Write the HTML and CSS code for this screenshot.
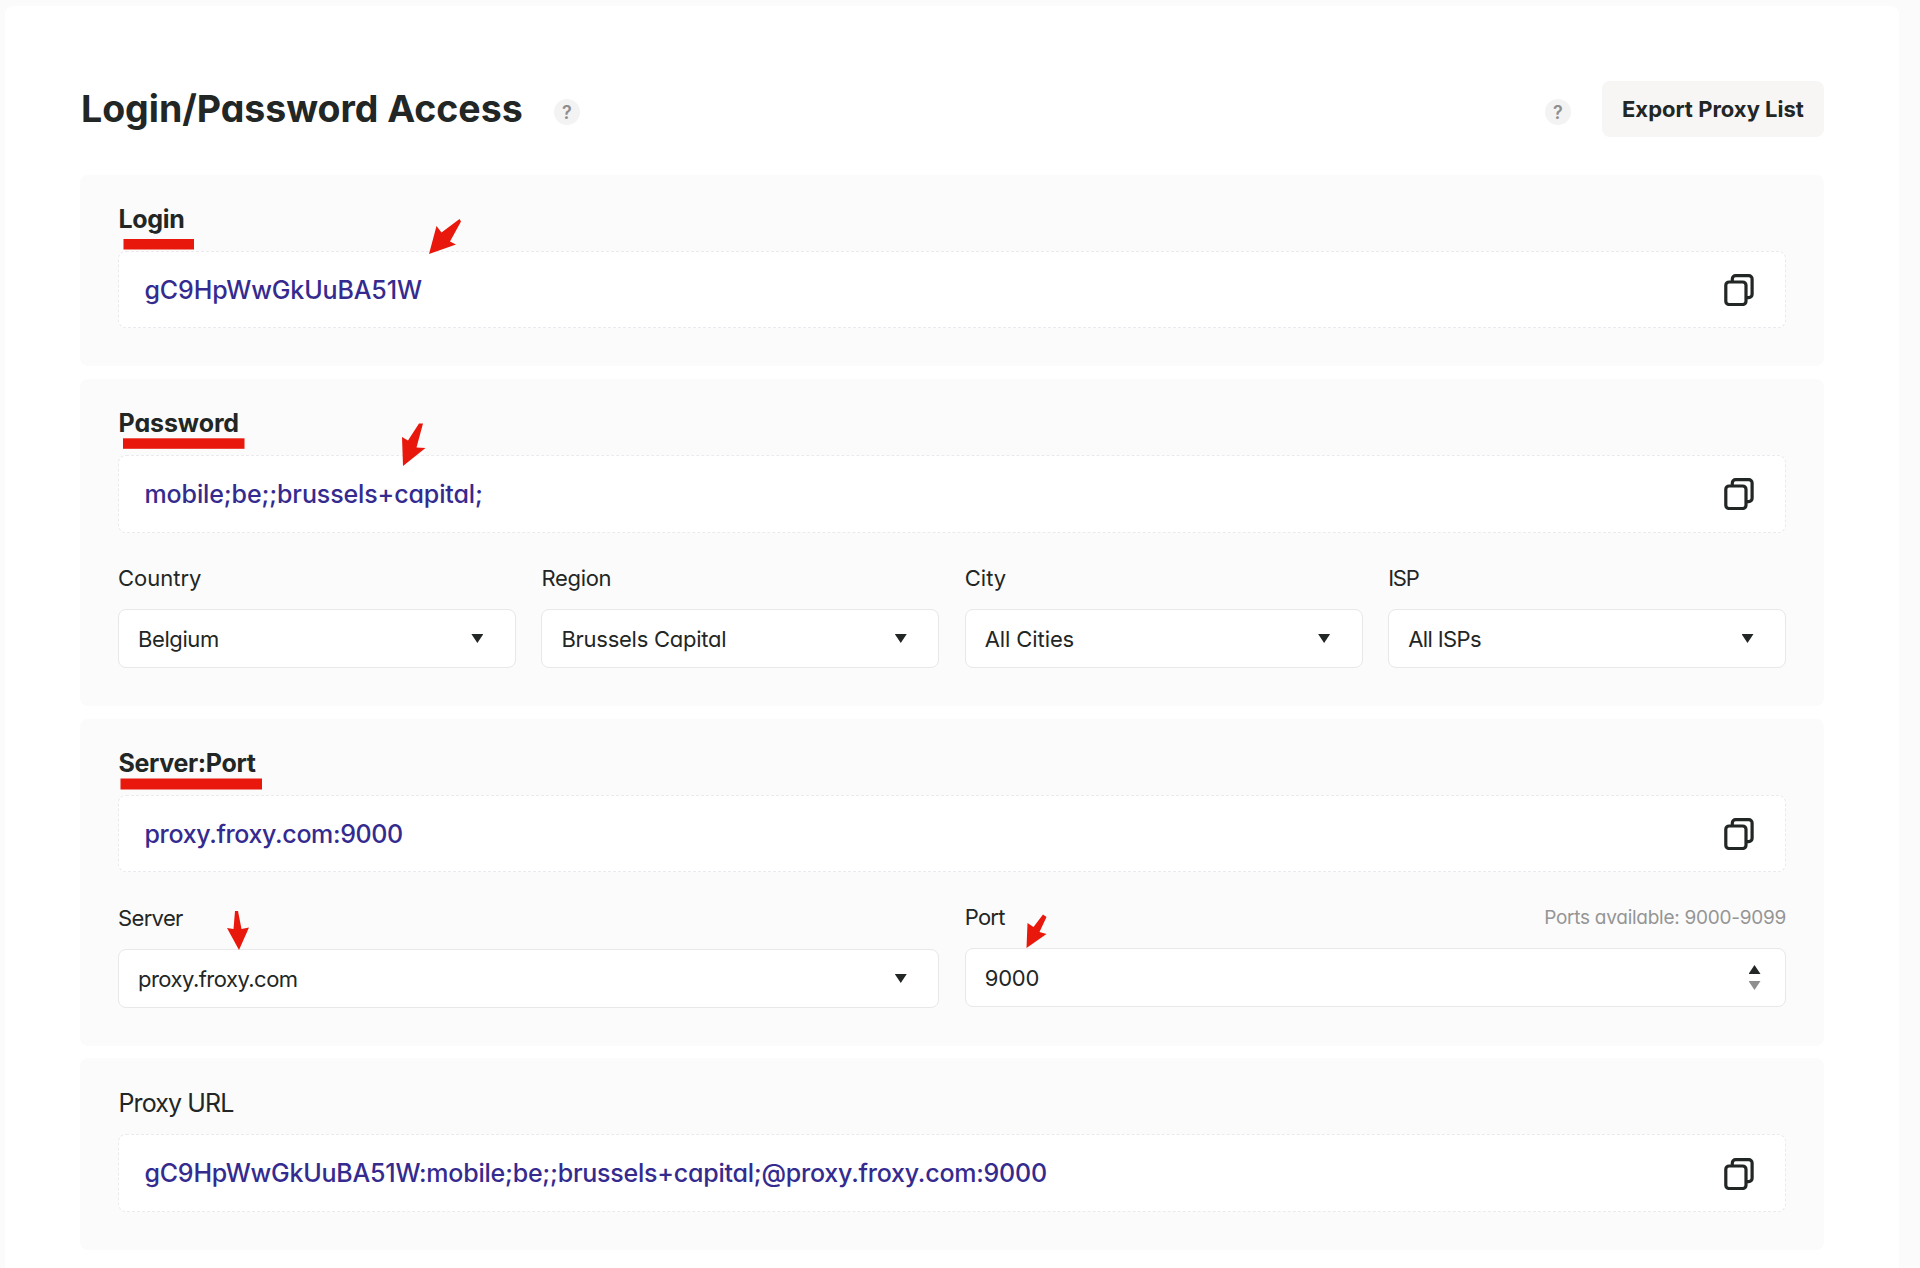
FILE: index.html
```
<!DOCTYPE html>
<html lang="en">
<head>
  <meta charset="UTF-8">
  <title>Login/Password Access</title>
  <link rel="stylesheet" href="styles.css">
</head>
<body>
  <svg class="sprite" width="0" height="0">
    <symbol id="copy" viewBox="0 0 30 32">
      <path d="M8.3 7.5V5a3.3 3.3 0 0 1 3.3-3.3h13.2A3.3 3.3 0 0 1 28.1 5v15.3a3.3 3.3 0 0 1-3.3 3.3h-2.3" />
      <rect x="1.8" y="8" width="20.2" height="22.5" rx="3.3" />
    </symbol>
  </svg>

  <main class="panel">
    <header class="header">
      <h1 class="title">Login/Password Access</h1>
      <span class="help">?</span>
      <span class="help help-export">?</span>
      <button class="export"><span>Export Proxy List</span></button>
    </header>

    <section class="card">
      <h2 class="card-title t-login">Login</h2>
      <div class="value">
        <span class="v-login">gC9HpWwGkUuBA51W</span>
        <svg class="copy"><use href="#copy" /></svg>
      </div>
    </section>

    <section class="card">
      <h2 class="card-title">Password</h2>
      <div class="value value-tall">
        <span class="v-password">mobile;be;;brussels+capital;</span>
        <svg class="copy"><use href="#copy" /></svg>
      </div>
      <div class="row row-four">
        <div class="field">
          <div class="label"><span>Country</span></div>
          <div class="select"><span class="s-country">Belgium</span><i class="down"></i></div>
        </div>
        <div class="field">
          <div class="label"><span class="l-region">Region</span></div>
          <div class="select"><span class="s-region">Brussels Capital</span><i class="down"></i></div>
        </div>
        <div class="field">
          <div class="label"><span>City</span></div>
          <div class="select"><span class="s-city">All Cities</span><i class="down"></i></div>
        </div>
        <div class="field">
          <div class="label"><span class="l-isp">ISP</span></div>
          <div class="select"><span class="s-isp">All ISPs</span><i class="down"></i></div>
        </div>
      </div>
    </section>

    <section class="card">
      <h2 class="card-title t-server">Server:Port</h2>
      <div class="value">
        <span class="v-server">proxy.froxy.com:9000</span>
        <svg class="copy"><use href="#copy" /></svg>
      </div>
      <div class="row row-two">
        <div class="field">
          <div class="label"><span class="l-server">Server</span></div>
          <div class="select"><span class="s-server">proxy.froxy.com</span><i class="down"></i></div>
        </div>
        <div class="field field-port">
          <div class="label"><span class="l-port">Port</span><small class="hint">Ports available: 9000-9099</small></div>
          <div class="select number">
            <span class="s-port">9000</span>
            <div class="spinner"><i class="up"></i><i class="down"></i></div>
          </div>
        </div>
      </div>
    </section>

    <section class="card card-last">
      <h2 class="card-title regular">Proxy URL</h2>
      <div class="value value-tall">
        <span class="v-url">gC9HpWwGkUuBA51W:mobile;be;;brussels+capital;@proxy.froxy.com:9000</span>
        <svg class="copy"><use href="#copy" /></svg>
      </div>
    </section>
  </main>

  <!-- red marks over the page -->
  <svg class="marks" width="1920" height="1268" viewBox="0 0 1920 1268">
    <rect x="123.5" y="239" width="70.5" height="10.5" />
    <rect x="123" y="438.3" width="121.5" height="10.5" />
    <rect x="120.5" y="778.5" width="141.5" height="11" />
    <path d="M429 254l7.5-28 5 6.500 18-13.500 1.500 2.500-11 20 6 3z" />
    <path d="M403 466l-1-29 6 3.500 11-17 4 0-6.500 24 9 .500z" />
    <path d="M239 950l-12-22 6.500 1 1.500-18h3l3.500 18 7.500-1.500z" />
    <path d="M1026.500 948l1-25 6 4 9.500-12.500 3.500 2.500-7 15 7 2z" />
  </svg>
</body>
</html>
```
FILE: styles.css
```
* {
  box-sizing: border-box;
}

body {
  margin: 0;
  padding: 6px 21px 0 5px;
  height: 1268px;
  overflow: hidden;
  background: #fbfbfb;
  color: #222625;
  font-family: Inter, sans-serif;
  font-feature-settings: "cv11";
  font-size: 22px;
}

.sprite {
  position: absolute;
}

.panel {
  display: flex;
  flex-direction: column;
  gap: 13px;
  height: 1270px;
  padding: 75px 75px 0;
  background: #fff;
  border-radius: 8px;
}

.header {
  display: flex;
  height: 81px;
}

.title {
  margin: 0;
  padding-left: 1px;
  width: 474px;
  font-size: 37.5px;
  line-height: 56px;
  font-weight: 700;
  letter-spacing: -0.04px;
  white-space: nowrap;
}

.help {
  display: flex;
  align-items: center;
  justify-content: center;
  width: 26px;
  height: 26px;
  margin-top: 18px;
  border-radius: 50%;
  background: #f3f3f3;
  color: #8e8e8e;
  font-size: 18px;
  font-weight: 600;
}

.help-export {
  margin-left: auto;
}

.export {
  display: flex;
  align-items: center;
  width: 222px;
  height: 56px;
  margin-left: 31px;
  padding: 0 0 0 20px;
  border: 0;
  border-radius: 8px;
  background: #f7f6f5;
  color: inherit;
  font: inherit;
  font-weight: 700;
  white-space: nowrap;
}

.card {
  padding: 28px 38px 38px;
  border-radius: 8px;
  background: #fbfbfb;
}

.card-title {
  margin: 0 0 16px;
  padding-left: 0.5px;
  font-size: 25px;
  line-height: 32px;
  font-weight: 650;
  letter-spacing: -0.1px;
}

.card-title.t-login {
  letter-spacing: -0.3px;
}

.card-title.t-server {
  letter-spacing: -0.35px;
}

.card-title.regular {
  font-weight: 400;
  letter-spacing: -0.88px;
}

.value {
  display: flex;
  align-items: center;
  justify-content: space-between;
  height: 77px;
  padding: 0 31px 0 25.5px;
  border: 1px dashed #e9e9ee;
  border-radius: 8px;
  background: #fff;
  color: #352b8f;
  font-size: 25px;
  font-weight: 550;
  white-space: nowrap;
}

.value-tall {
  height: 78px;
}

.card-last {
  margin-top: -1px;
}

.card-last .card-title {
  padding-top: 1px;
  margin-bottom: 15px;
}

.card-last .copy {
  margin-top: 2px;
}

.v-login {
  letter-spacing: -0.13px;
}

.v-password {
  letter-spacing: -0.12px;
}

.v-server {
  letter-spacing: -0.36px;
}

.v-url {
  letter-spacing: -0.23px;
}

.copy {
  width: 30px;
  height: 32px;
  fill: none;
  stroke: #222625;
  stroke-width: 3.2;
}

.row {
  display: grid;
  column-gap: 25.5px;
}

.row-four {
  grid-template-columns: repeat(4, 1fr);
  margin-top: 28px;
}

.row-two {
  grid-template-columns: repeat(2, 1fr);
  margin-top: 29px;
}

.field-port {
  margin-top: -1px;
}

.label {
  display: flex;
  align-items: center;
  justify-content: space-between;
  height: 34px;
  margin-bottom: 14px;
}

.l-region {
  letter-spacing: -0.3px;
}

.l-isp {
  letter-spacing: -1.2px;
}

.l-server {
  letter-spacing: -0.65px;
}

.l-port {
  letter-spacing: -0.75px;
}

.hint {
  color: #959595;
  font-size: 19px;
  letter-spacing: -0.26px;
}

.select {
  display: flex;
  align-items: center;
  justify-content: space-between;
  height: 59px;
  padding: 0 31.5px 0 19px;
  border: 1px solid #e8e8e8;
  border-radius: 8px;
  background: #fff;
}

.s-country {
  letter-spacing: -0.4px;
}

.s-region {
  letter-spacing: -0.25px;
}

.s-city {
  letter-spacing: -0.1px;
}

.s-isp {
  letter-spacing: -0.6px;
}

.s-server {
  letter-spacing: -0.52px;
}

.s-port {
  letter-spacing: -0.2px;
}

.number {
  padding-right: 24.5px;
}

.spinner {
  display: flex;
  flex-direction: column;
  gap: 7px;
}

.down,
.up {
  width: 12px;
  height: 9px;
  background: #222625;
}

.down {
  clip-path: polygon(0 0, 100% 0, 50% 100%);
}

.up {
  clip-path: polygon(50% 0, 100% 100%, 0 100%);
}

.spinner .down {
  background: #8f8f8f;
}

.marks {
  position: absolute;
  top: 0;
  left: 0;
  fill: #e8180c;
}
```
